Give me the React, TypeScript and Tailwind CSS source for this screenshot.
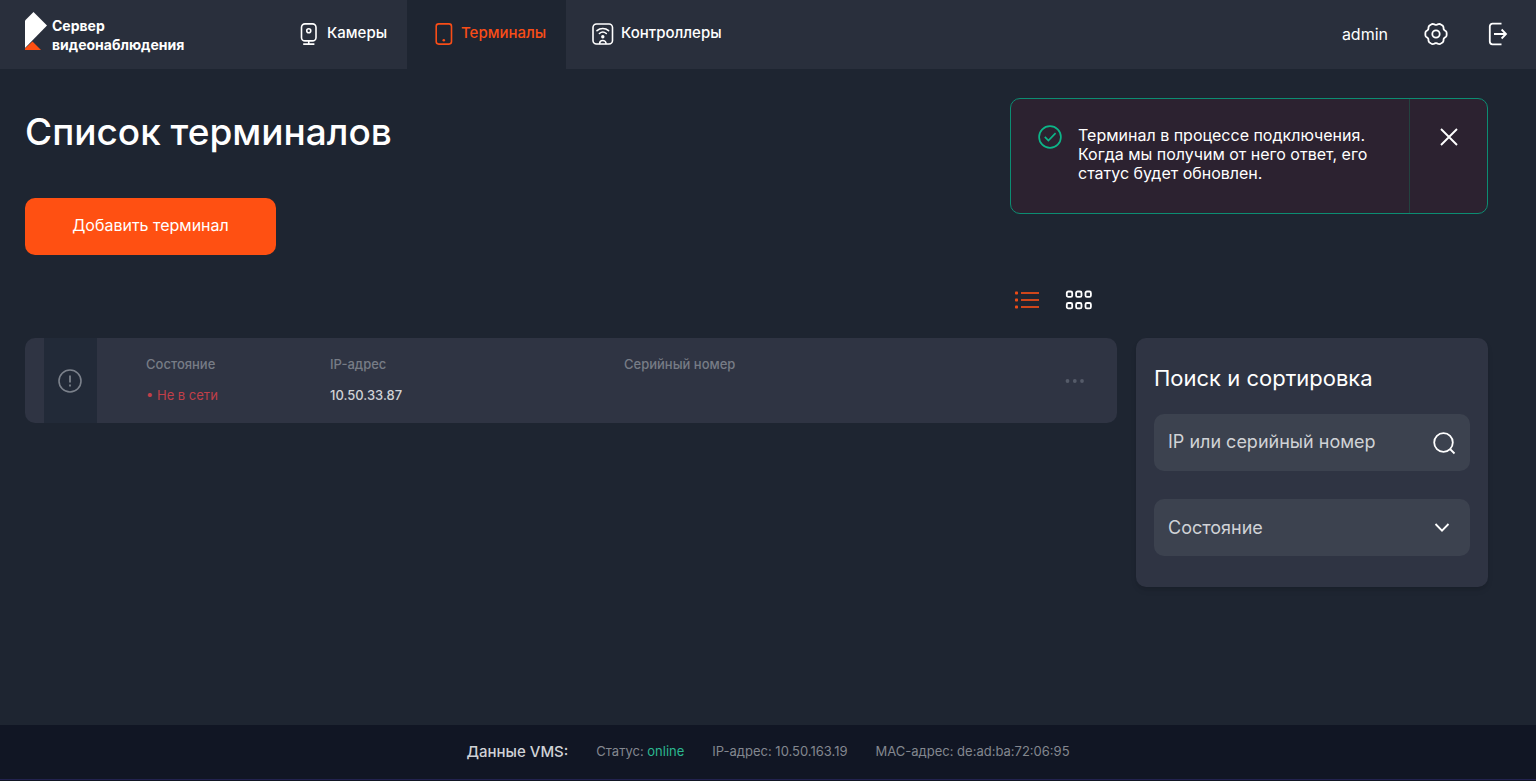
import type { ReactNode } from "react";

type IconProps = { className?: string };

function Logo() {
  return (
    <svg width="23" height="40" viewBox="0 0 23 40" aria-hidden="true">
      <path d="M8.500 0 22 13.500 0 36V8.500z" fill="#fff" />
      <path d="M7.500 29.500 16 38H0V36.500z" fill="#ff4f12" />
    </svg>
  );
}

function CameraIcon({ className }: IconProps) {
  return (
    <svg className={className} width="18" height="22" viewBox="0 0 18 22" fill="none" stroke="currentColor" strokeWidth="1.6" aria-hidden="true">
      <rect x="1.500" y="0.900" width="14.500" height="17" rx="3.500" />
      <circle cx="8.750" cy="7.700" r="2" />
      <path d="M8.750 18v3M3.200 21.100h11.200" />
    </svg>
  );
}

function TerminalIcon({ className }: IconProps) {
  return (
    <svg className={className} width="18" height="22" viewBox="0 0 18 22" fill="none" stroke="currentColor" strokeWidth="1.6" aria-hidden="true">
      <rect x="1.200" y="0.900" width="15.300" height="20.200" rx="2.500" />
      <circle cx="8.800" cy="17.300" r="1.300" fill="currentColor" stroke="none" />
    </svg>
  );
}

function ControllerIcon({ className }: IconProps) {
  return (
    <svg className={className} width="22" height="22" viewBox="0 0 22 22" fill="none" stroke="currentColor" strokeWidth="1.6" strokeLinecap="round" aria-hidden="true">
      <rect x="1" y="1" width="19.500" height="20" rx="3.500" />
      <path d="M5 7.700c3.300-2.900 8.300-2.900 11.600 0M7.400 10.500c2-1.700 4.900-1.700 6.900 0" />
      <circle cx="10.800" cy="13.700" r="1.700" fill="currentColor" stroke="none" />
      <path d="M7.600 20.500c0-4 6.400-4 6.400 0" />
    </svg>
  );
}

const gearPoints = Array.from({ length: 90 }, (_, i) => {
  const a = (i * Math.PI) / 45;
  const r = 10.1 + 0.8 * Math.cos(6 * a) - 0.25 * Math.cos(12 * a);
  return `${(12 + r * Math.cos(a)).toFixed(2)},${(12 + r * Math.sin(a)).toFixed(2)}`;
}).join(" ");

function GearIcon() {
  return (
    <svg width="24" height="24" viewBox="0 0 24 24" fill="none" stroke="currentColor" strokeWidth="1.8" strokeLinejoin="round" aria-hidden="true">
      <polygon points={gearPoints} />
      <circle cx="12" cy="12" r="3.700" />
    </svg>
  );
}

function LogoutIcon() {
  return (
    <svg width="20" height="24" viewBox="0 0 20 24" fill="none" stroke="currentColor" strokeWidth="1.800" aria-hidden="true">
      <path d="M13.500 1.700H4.500a2.700 2.700 0 0 0-2.700 2.700v15.200a2.700 2.700 0 0 0 2.700 2.700h9M6 12h12M13.600 7.500 18 12l-4.400 4.500" />
    </svg>
  );
}

function CheckIcon() {
  return (
    <svg className="shrink-0 text-[#0cb588]" width="24" height="24" viewBox="0 0 24 24" fill="none" stroke="currentColor" strokeWidth="1.7" aria-hidden="true">
      <circle cx="12" cy="12" r="10.900" />
      <path d="m6.800 11.800 3.600 3.700 7.200-7.300" />
    </svg>
  );
}

function NavTab({ label, icon, active, className }: { label: string; icon: ReactNode; active?: boolean; className: string }) {
  return (
    <a
      href="#"
      aria-current={active ? "page" : undefined}
      className={`flex items-center pb-[2px] text-[15px] font-medium ${active ? "bg-[#1e2531] text-[#f94d17]" : "text-white"} ${className}`}
    >
      {icon}
      {label}
    </a>
  );
}

function Header() {
  return (
    <header className="flex h-[69px] bg-[#292f3c]">
      <a href="#" className="flex w-[275px] shrink-0 items-start gap-1 pt-3 pl-[25px] text-sm leading-[19px] font-bold">
        <Logo />
        <span className="pt-1">
          Сервер
          <br />
          видеонаблюдения
        </span>
      </a>
      <nav className="flex">
        <NavTab className="w-[132px] gap-[9px] pl-[25px]" label="Камеры" icon={<CameraIcon />} />
        <NavTab className="w-[159px] gap-2 pl-7" label="Терминалы" icon={<TerminalIcon />} active />
        <NavTab className="gap-[7px] pl-[26px]" label="Контроллеры" icon={<ControllerIcon />} />
      </nav>
      <div className="ml-auto flex items-center pr-7 pb-[2px]">
        <span className="mr-9 text-base">admin</span>
        <button type="button" aria-label="Настройки" className="mr-10">
          <GearIcon />
        </button>
        <button type="button" aria-label="Выйти">
          <LogoutIcon />
        </button>
      </div>
    </header>
  );
}

function Toast() {
  return (
    <div role="status" className="flex min-h-[116px] w-[478px] overflow-hidden rounded-[10px] border border-[#0c8d72] bg-[#2c2230]">
      <div className="flex flex-1 gap-4 pt-[26px] pl-[27px]">
        <CheckIcon />
        <p className="pt-px text-base leading-[19px]">
          Терминал в процессе подключения.
          <br />
          Когда мы получим от него ответ, его
          <br />
          статус будет обновлен.
        </p>
      </div>
      <button type="button" aria-label="Закрыть" className="flex w-[78px] items-start justify-center border-l border-[#23423f] pt-[29px]">
        <svg width="18" height="18" viewBox="0 0 18 18" stroke="currentColor" strokeWidth="1.9" aria-hidden="true">
          <path d="m1 1 16 16M17 1 1 17" />
        </svg>
      </button>
    </div>
  );
}

function ViewSwitch() {
  return (
    <div className="mr-6 flex items-center justify-end gap-[25px]">
      <button type="button" aria-label="Список" aria-pressed="true" className="text-[#ee4c17]">
        <svg width="26" height="20" viewBox="0 0 26 20" fill="currentColor" aria-hidden="true">
          {[3, 10, 17].map((y) => (
            <g key={y}>
              <rect x="1" y={y - 1.5} width="3" height="3" rx="0.800" />
              <rect x="7" y={y - 1} width="18" height="2" opacity="0.850" />
            </g>
          ))}
        </svg>
      </button>
      <button type="button" aria-label="Плитка" aria-pressed="false">
        <svg width="28" height="20" viewBox="0 0 28 20" fill="none" stroke="currentColor" strokeWidth="1.800" aria-hidden="true">
          {[4.5, 13.8, 23.2].map((x) =>
            [4.2, 15.7].map((y) => <rect key={`${x}-${y}`} x={x - 2.7} y={y - 2.7} width="5.400" height="5.400" rx="1.500" />),
          )}
        </svg>
      </button>
    </div>
  );
}

function TerminalRow() {
  return (
    <article className="mt-7 flex h-[85px] overflow-hidden rounded-[10px] bg-[#2f3443] pl-[19px]">
      <div className="flex w-[53px] shrink-0 items-center bg-[#222a38] pl-[14px] text-[#7b818b]">
        <svg width="24" height="24" viewBox="0 0 24 24" fill="none" stroke="currentColor" strokeWidth="1.600" aria-label="Внимание">
          <circle cx="12" cy="12" r="11" />
          <path d="M12 6.500v7M12 15.500v2" strokeWidth="1.800" />
        </svg>
      </div>
      <dl className="grid flex-1 grid-cols-[184px_294px_1fr] pt-4 pl-[49px] text-[13px] leading-5">
        <div className="flex flex-col gap-[11px]">
          <dt className="font-medium text-[#777c86]">Состояние</dt>
          <dd className="text-[#c13f49]">• Не в сети</dd>
        </div>
        <div className="flex flex-col gap-[11px]">
          <dt className="font-medium text-[#777c86]">IP-адрес</dt>
          <dd className="font-medium text-[#d0d2d6]">10.50.33.87</dd>
        </div>
        <div>
          <dt className="font-medium text-[#777c86]">Серийный номер</dt>
        </div>
      </dl>
      <button type="button" aria-label="Действия" className="mr-8 text-[#555b69]">
        <svg width="20" height="4" viewBox="0 0 20 4" fill="currentColor" aria-hidden="true">
          <circle cx="2.500" cy="2" r="1.900" />
          <circle cx="9.800" cy="2" r="1.900" />
          <circle cx="17" cy="2" r="1.900" />
        </svg>
      </button>
    </article>
  );
}

function FilterPanel() {
  return (
    <aside className="mt-12 h-[249px] w-[352px] shrink-0 rounded-[10px] bg-[#2f3443] px-[18px] pt-6 shadow-md">
      <h2 className="text-[22px] leading-8">Поиск и сортировка</h2>
      <form className="mt-5 flex flex-col gap-7" onSubmit={(e) => e.preventDefault()}>
        <div className="flex h-[57px] items-center rounded-[10px] bg-[#3c424f] pr-[14px]">
          <input
            type="text"
            aria-label="IP или серийный номер"
            placeholder="IP или серийный номер"
            className="min-w-0 flex-1 pb-[2px] pl-[14px] text-lg outline-none placeholder:text-[#d0d2d6]"
          />
          <button type="submit" aria-label="Найти">
            <svg width="24" height="24" viewBox="0 0 24 24" fill="none" stroke="currentColor" strokeWidth="1.800" aria-hidden="true">
              <circle cx="11.500" cy="11.500" r="9.300" />
              <path d="m18 18 4.500 4.500" />
            </svg>
          </button>
        </div>
        <div className="relative">
          <select aria-label="Состояние" className="h-[57px] w-full appearance-none rounded-[10px] bg-[#3c424f] pl-[14px] text-lg text-[#d0d2d6] outline-none">
            <option>Состояние</option>
          </select>
          <svg className="pointer-events-none absolute top-6 right-5" width="16" height="10" viewBox="0 0 16 10" fill="none" stroke="currentColor" strokeWidth="1.800" aria-hidden="true">
            <path d="m1.500 1 6.500 6.700L14.500 1" />
          </svg>
        </div>
      </form>
    </aside>
  );
}

function Footer() {
  return (
    <footer className="bg-[#111624] pb-px">
      <div className="flex h-[55px] items-center justify-center gap-7 border-b border-[#22224f] text-[13px] text-[#83878f]">
        <span className="text-[15px] font-medium text-[#d0d2d6]">Данные VMS:</span>
        <span>
          Статус: <span className="text-[#2bb890]">online</span>
        </span>
        <span>IP-адрес: 10.50.163.19</span>
        <span>MAC-адрес: de:ad:ba:72:06:95</span>
      </div>
    </footer>
  );
}

export default function App() {
  return (
    <div className="flex min-h-screen flex-col bg-[#1e2531] font-['Inter','Liberation_Sans',sans-serif] text-white">
      <Header />
      <main className="flex-1 pt-[29px] pr-12 pl-[25px]">
        <div className="flex items-start justify-between">
          <div className="pt-2">
            <h1 className="text-[37px] leading-[52px] font-medium">Список терминалов</h1>
            <button type="button" className="mt-10 h-[57px] w-[251px] rounded-[10px] bg-[#ff5012] pb-1 text-base">
              Добавить терминал
            </button>
          </div>
          <Toast />
        </div>
        <div className="mt-[35px] flex gap-[19px]">
          <section className="min-w-0 flex-1">
            <ViewSwitch />
            <TerminalRow />
          </section>
          <FilterPanel />
        </div>
      </main>
      <Footer />
    </div>
  );
}
